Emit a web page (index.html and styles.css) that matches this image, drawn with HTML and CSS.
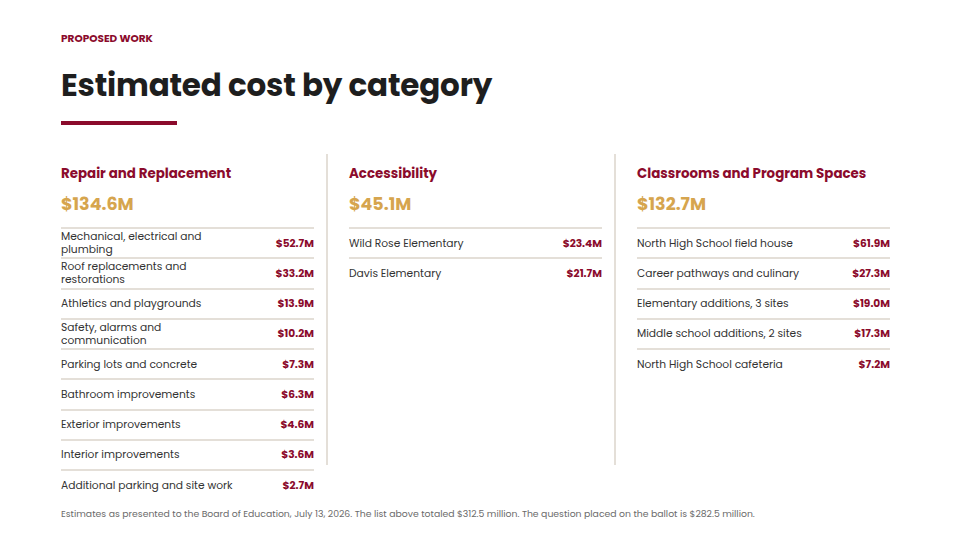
FILE: index.html
```html
<!DOCTYPE html>
<html lang="en">
<head>
<meta charset="utf-8">
<title>Estimated cost by category</title>
<link rel="stylesheet" href="styles.css">
</head>
<body>
<main class="slide">
  <p class="eyebrow">PROPOSED WORK</p>
  <h1 class="title">Estimated cost by category</h1>
  <div class="accent-bar"></div>

  <section class="columns">
    <div class="col col-first">
      <h2 class="cat-name">Repair and Replacement</h2>
      <p class="cat-total">$134.6M</p>
      <ul class="items">
        <li class="item"><span class="item-label">Mechanical, electrical and plumbing</span><span class="item-value">$52.7M</span></li>
        <li class="item"><span class="item-label">Roof replacements and restorations</span><span class="item-value">$33.2M</span></li>
        <li class="item"><span class="item-label">Athletics and playgrounds</span><span class="item-value">$13.9M</span></li>
        <li class="item"><span class="item-label">Safety, alarms and communication</span><span class="item-value">$10.2M</span></li>
        <li class="item"><span class="item-label">Parking lots and concrete</span><span class="item-value">$7.3M</span></li>
        <li class="item"><span class="item-label">Bathroom improvements</span><span class="item-value">$6.3M</span></li>
        <li class="item"><span class="item-label">Exterior improvements</span><span class="item-value">$4.6M</span></li>
        <li class="item"><span class="item-label">Interior improvements</span><span class="item-value">$3.6M</span></li>
        <li class="item"><span class="item-label">Additional parking and site work</span><span class="item-value">$2.7M</span></li>
      </ul>
    </div>
    <div class="col col-mid">
      <h2 class="cat-name">Accessibility</h2>
      <p class="cat-total">$45.1M</p>
      <ul class="items">
        <li class="item"><span class="item-label">Wild Rose Elementary</span><span class="item-value">$23.4M</span></li>
        <li class="item"><span class="item-label">Davis Elementary</span><span class="item-value">$21.7M</span></li>
      </ul>
    </div>
    <div class="col col-last">
      <h2 class="cat-name">Classrooms and Program Spaces</h2>
      <p class="cat-total">$132.7M</p>
      <ul class="items">
        <li class="item"><span class="item-label">North High School field house</span><span class="item-value">$61.9M</span></li>
        <li class="item"><span class="item-label">Career pathways and culinary</span><span class="item-value">$27.3M</span></li>
        <li class="item"><span class="item-label">Elementary additions, 3 sites</span><span class="item-value">$19.0M</span></li>
        <li class="item"><span class="item-label">Middle school additions, 2 sites</span><span class="item-value">$17.3M</span></li>
        <li class="item"><span class="item-label">North High School cafeteria</span><span class="item-value">$7.2M</span></li>
      </ul>
    </div>
  </section>

  <p class="footnote">Estimates as presented to the Board of Education, July 13, 2026. The list above totaled $312.5 million. The question placed on the ballot is $282.5 million.</p>
</main>
</body>
</html>
```

FILE: styles.css
```css
* { box-sizing: border-box; }

html, body {
  margin: 0;
  padding: 0;
  background: #ffffff;
}

body {
  font-family: "Poppins", Inter, "Noto Sans", sans-serif;
  color: #2b2b2b;
}

.slide {
  width: 960px;
  height: 540px;
  padding: 32px 70px 0 61px;
  overflow: hidden;
}

.eyebrow {
  margin: 0;
  font-size: 10.5px;
  line-height: 14px;
  font-weight: 700;
  color: #8b0b2c;
}

.title {
  margin: 19px 0 0;
  font-size: 31px;
  line-height: 40px;
  font-weight: 700;
  letter-spacing: -0.2px;
  color: #1e1e1e;
}

.accent-bar {
  width: 116px;
  height: 4px;
  margin-top: 16px;
  background: #8b0b2c;
}

.columns {
  display: flex;
  height: 311px;
  margin-top: 29px;
}

.col {
  width: 253px;
  flex: none;
  box-sizing: content-box;
  padding-top: 10px;
}

.col-first {
  padding-right: 12px;
  border-right: 2px solid #e4dfd8;
}

.col-mid {
  padding-left: 21px;
  padding-right: 12px;
  border-right: 2px solid #e4dfd8;
}

.col-last {
  padding-left: 21px;
}

.cat-name {
  margin: 0;
  font-size: 13.4px;
  line-height: 20px;
  font-weight: 700;
  color: #8b0b2c;
}

.cat-total {
  margin: 8px 0 0;
  font-size: 17.5px;
  line-height: 24px;
  font-weight: 700;
  color: #d6a54e;
}

.items {
  list-style: none;
  margin: 11px 0 0;
  padding: 0;
}

.item {
  display: flex;
  align-items: center;
  justify-content: space-between;
  gap: 12px;
  min-height: 30.25px;
  padding: 1px 0;
  border-top: 2px solid #e4dfd8;
}

.item-label {
  max-width: 180px;
  font-size: 10.7px;
  line-height: 13px;
  color: #333333;
}

.item-value {
  flex: none;
  font-size: 10.6px;
  line-height: 13px;
  font-weight: 700;
  color: #8b0b2c;
}

.footnote {
  margin: 42px 0 0;
  font-size: 9.3px;
  line-height: 14px;
  color: #6b6b6b;
}
```
